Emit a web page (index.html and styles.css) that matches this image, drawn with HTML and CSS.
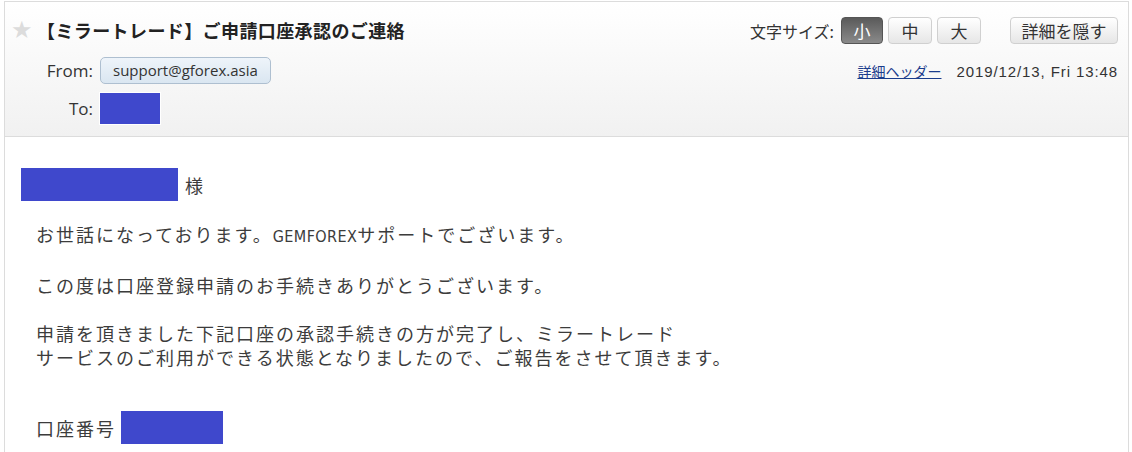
FILE: index.html
```html
<!DOCTYPE html>
<html lang="ja">
<head>
<meta charset="utf-8">
<title>【ミラートレード】ご申請口座承認のご連絡</title>
<link rel="stylesheet" href="styles.css">
</head>
<body>
<div class="mail">
  <div class="head">
    <div class="head-left">
      <div class="subject-row">
        <span class="star">★</span>
        <h1 class="subject">【ミラートレード】ご申請口座承認のご連絡</h1>
      </div>
      <div class="addr">
        <span class="addr-label">From:</span>
        <span class="pill">support@gforex.asia</span>
        <span class="addr-label">To:</span>
        <span class="mask mask-to"></span>
      </div>
    </div>
    <div class="head-right">
      <div class="tools">
        <span class="size-label">文字サイズ:</span>
        <span class="btn btn-size is-active">小</span>
        <span class="btn btn-size">中</span>
        <span class="btn btn-size">大</span>
        <span class="btn btn-hide">詳細を隠す</span>
      </div>
      <div class="meta">
        <a class="detail-link" href="#">詳細ヘッダー</a>
        <span class="date">2019/12/13, Fri 13:48</span>
      </div>
    </div>
  </div>
  <div class="content">
    <div class="greet">
      <span class="mask mask-name"></span>
      <span>様</span>
    </div>
    <div class="message">
      <p>お世話になっております。<span class="latin">GEMFOREX</span>サポートでございます。</p>
      <p>この度は口座登録申請のお手続きありがとうございます。</p>
      <p>申請を頂きました下記口座の承認手続きの方が完了し、ミラートレード<br>サービスのご利用ができる状態となりましたので、ご報告をさせて頂きます。</p>
      <div class="account">
        <span>口座番号</span>
        <span class="mask mask-acct"></span>
      </div>
    </div>
  </div>
</div>
</body>
</html>
```

FILE: styles.css
```css
* { box-sizing: border-box; }

html, body {
  margin: 0;
  padding: 0;
  background: #fff;
  overflow: hidden;
}

body {
  font-family: "Noto Sans CJK JP", "Noto Sans", sans-serif;
  color: #333;
}

.mail {
  margin: 1px 0 0 4px;
  width: 1125px;
  border: 1px solid #dcdcdc;
  border-bottom: none;
}

.head {
  display: flex;
  justify-content: space-between;
  padding: 14px 10px 11px 8px;
  background: linear-gradient(#ffffff, #f1f1f1);
  border-bottom: 1px solid #dcdcdc;
}

.subject-row {
  display: flex;
  align-items: center;
  height: 28px;
}

.star {
  color: #dcdcdc;
  font-size: 24px;
  width: 24px;
  line-height: 1;
  font-family: "DejaVu Sans", sans-serif;
  margin-left: -2px;
  margin-right: 2px;
}

.subject {
  margin: 0;
  font-size: 18px;
  font-weight: bold;
  letter-spacing: 0.4px;
  color: #222;
  line-height: 28px;
}

.addr {
  display: grid;
  grid-template-columns: 80px auto;
  column-gap: 7px;
  row-gap: 8px;
  margin-top: 13px;
  align-items: center;
  justify-items: start;
}

.addr-label {
  justify-self: end;
  font-family: "Open Sans", "Noto Sans CJK JP", sans-serif;
  font-size: 17px;
  color: #333;
}

.pill {
  height: 27px;
  line-height: 25px;
  padding: 0 12px;
  border: 1px solid #aebfd0;
  border-radius: 5px;
  background: linear-gradient(#eef4fa, #dae6f1);
  font-family: "Open Sans", "Noto Sans CJK JP", sans-serif;
  font-size: 15px;
  color: #333;
}

.mask {
  display: block;
  background: #3f48cc;
}

.mask-to {
  width: 62px;
  height: 33px;
  margin-left: -1px;
  border: 1px solid #fff;
}

.head-right {
  display: flex;
  flex-direction: column;
  align-items: flex-end;
}

.tools {
  display: flex;
  align-items: center;
  height: 28px;
  padding-top: 1px;
}

.size-label {
  font-size: 16px;
  color: #333;
  margin-right: 7px;
}

.btn {
  display: flex;
  align-items: center;
  justify-content: center;
  height: 27px;
  border: 1px solid #d0d0d0;
  border-radius: 4px;
  background: linear-gradient(#ffffff, #e6e6e6);
  font-size: 17px;
  color: #333;
}

.btn-size {
  width: 44px;
  margin-right: 5px;
}

.btn-size.is-active {
  width: 42px;
  border-color: #555;
  background: linear-gradient(#5a5a5a, #8a8a8a);
  color: #fff;
}

.btn-hide {
  width: 108px;
  margin-left: 24px;
}

.meta {
  display: flex;
  align-items: center;
  gap: 15px;
  margin-top: 17px;
  font-size: 14px;
}

.detail-link {
  color: #1a3c8c;
  text-decoration: underline;
}

.date {
  font-family: "Liberation Sans", sans-serif;
  font-size: 15px;
  letter-spacing: 0.9px;
  color: #333;
}

.content {
  padding: 31px 0 40px 16px;
  font-size: 18px;
  color: #3c3c3c;
}

.greet {
  display: flex;
  align-items: center;
  gap: 7px;
  height: 33px;
}

.mask-name {
  width: 157px;
  height: 33px;
}

.message {
  margin: 21px 0 0 15px;
  letter-spacing: 2px;
  line-height: 24px;
}

.message p {
  margin: 0 0 24px 0;
}

.message p:last-of-type {
  margin-bottom: 0;
}

.latin {
  font-family: "Liberation Sans Narrow", "DejaVu Sans Condensed", sans-serif;
  font-size: 16px;
  letter-spacing: 0.4px;
}

.account {
  display: flex;
  align-items: center;
  gap: 5px;
  margin-top: 42px;
}

.mask-acct {
  width: 102px;
  height: 33px;
}
```
